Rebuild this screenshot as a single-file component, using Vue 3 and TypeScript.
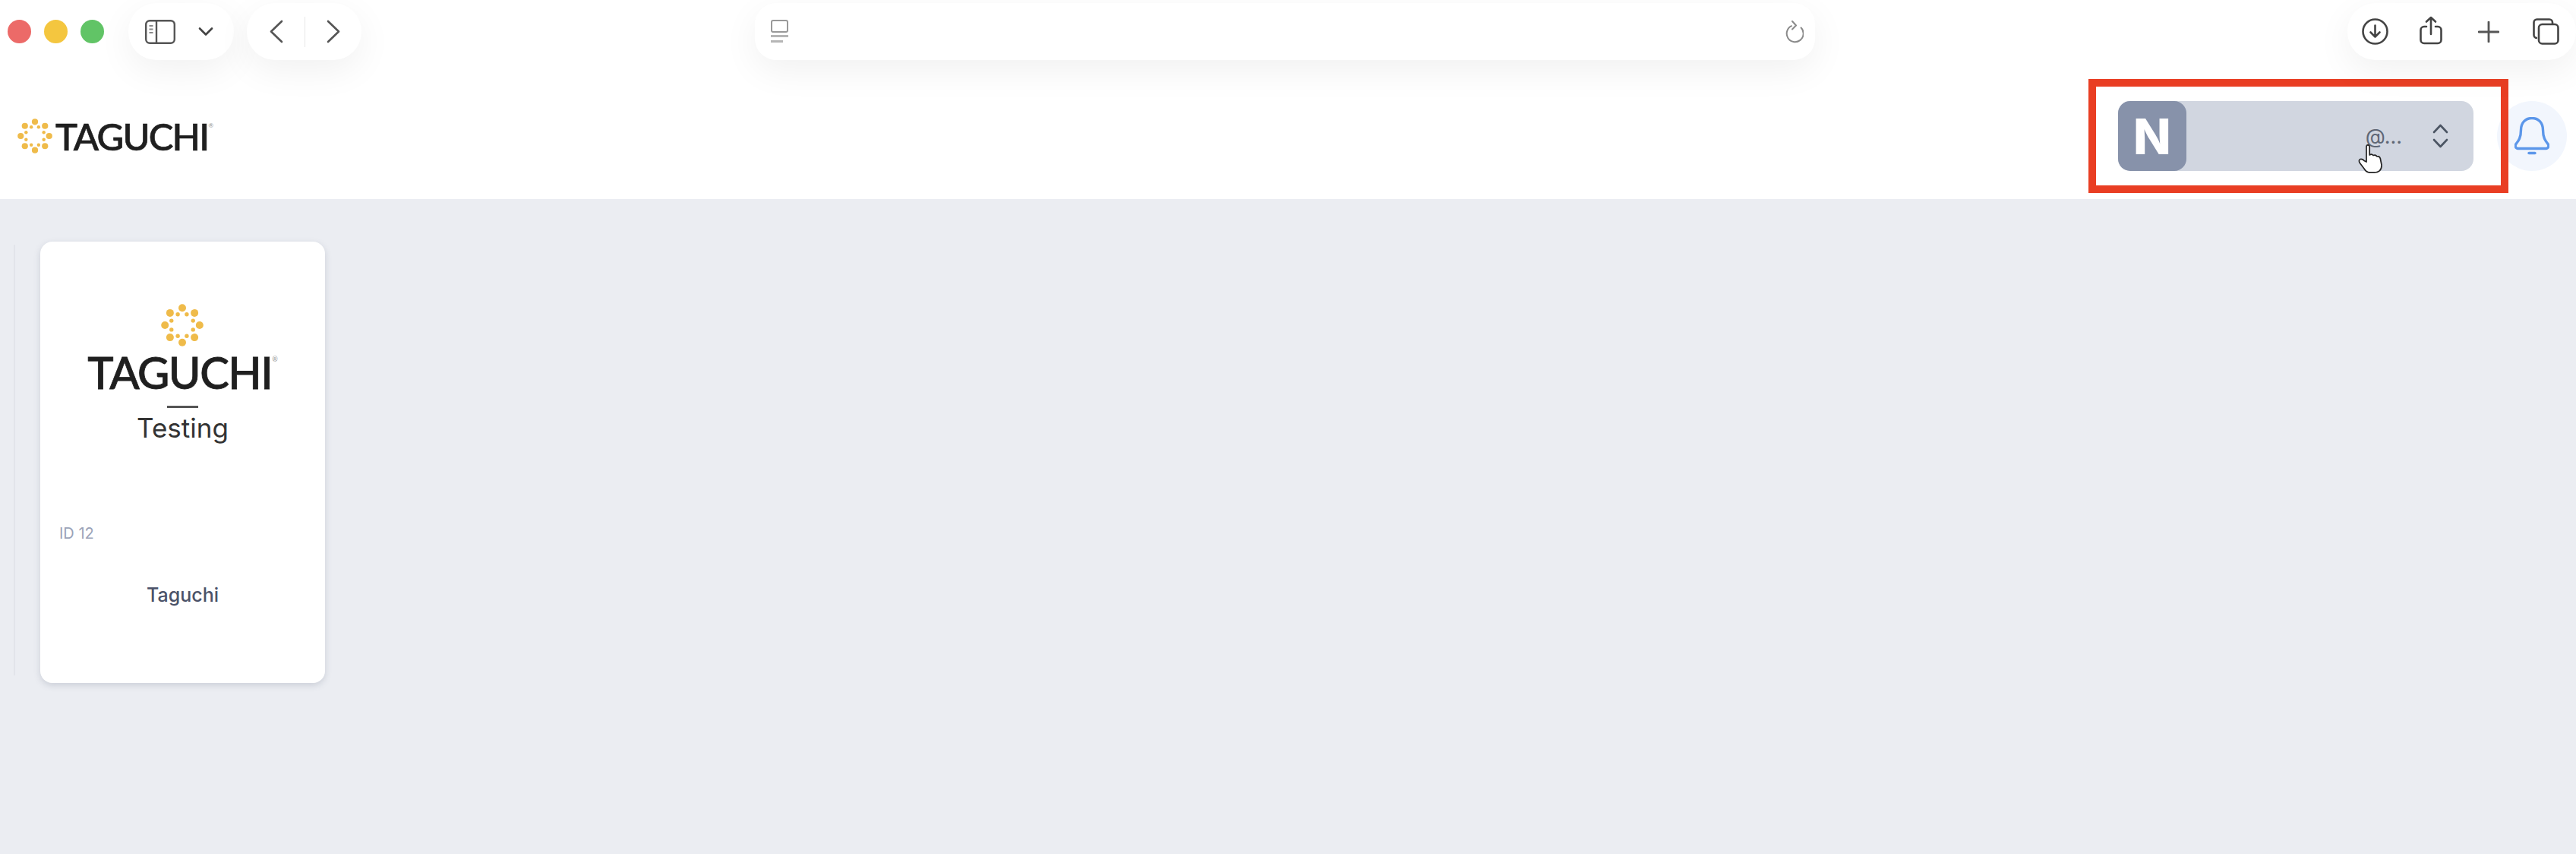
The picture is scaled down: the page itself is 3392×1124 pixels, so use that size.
<script setup lang="ts">
interface Dot {
  x: number
  y: number
  r: number
  key: string
}

// sunburst mark: 8 big dots on the outside, 8 small ones between them
const dots: Dot[] = []
for (let i = 0; i < 8; i++) {
  const a = (i * Math.PI) / 4
  dots.push({ x: 28 + 22.8 * Math.sin(a), y: 28 - 22.8 * Math.cos(a), r: 5, key: `o${i}` })
  const b = a + Math.PI / 8
  dots.push({ x: 28 + 15.4 * Math.sin(b), y: 28 - 15.4 * Math.cos(b), r: 2.7, key: `i${i}` })
}
</script>

<template>
  <div class="page">
    <div class="chrome">
      <div class="lights">
        <span class="light light-red"></span>
        <span class="light light-yellow"></span>
        <span class="light light-green"></span>
      </div>
      <div class="pill pill-sidebar">
        <svg class="ico-sidebar" viewBox="0 0 40 32" fill="none" stroke="#555" stroke-width="2.4">
          <rect x="1.2" y="1.2" width="37.6" height="29.6" rx="5" />
          <path d="M15 1.2v29.6" />
          <path d="M5.5 8h5M5.5 12.5h5M5.5 17h5" stroke-width="2" stroke="#888" />
        </svg>
        <svg class="ico-down" viewBox="0 0 20 13" fill="none" stroke="#444" stroke-width="2.6" stroke-linecap="round" stroke-linejoin="round">
          <path d="M2 2.500l8 8 8-8" />
        </svg>
      </div>
      <div class="pill pill-nav">
        <svg class="ico-nav" viewBox="0 0 18 31" fill="none" stroke="#555" stroke-width="2.6" stroke-linecap="round" stroke-linejoin="round">
          <path d="M16 2L2 15.500 16 29" />
        </svg>
        <span class="nav-sep"></span>
        <svg class="ico-nav" viewBox="0 0 18 31" fill="none" stroke="#555" stroke-width="2.6" stroke-linecap="round" stroke-linejoin="round">
          <path d="M2 2l14 13.500L2 29" />
        </svg>
      </div>
      <div class="address">
        <svg class="ico-page" viewBox="0 0 23 31" fill="none">
          <rect x="1" y="1" width="21" height="15" rx="2" stroke="#999" stroke-width="2" />
          <path d="M0 21.500h23" stroke="#b5b5b5" stroke-width="3" />
          <path d="M0 28.500h16" stroke="#b5b5b5" stroke-width="3" />
        </svg>
        <svg class="ico-reload" viewBox="0 0 25 30" fill="none" stroke="#8a8a8a" stroke-width="2" stroke-linecap="round" stroke-linejoin="round">
          <path d="M9 7.200A11 11 0 1 0 21.600 9.500" />
          <path d="M10 1l5 5.500-5 5" />
        </svg>
      </div>
      <div class="pill pill-actions">
        <svg class="ico-action" viewBox="0 0 35 35" fill="none" stroke="#444" stroke-width="2.6" stroke-linecap="round" stroke-linejoin="round">
          <circle cx="17.500" cy="17.500" r="16" />
          <path d="M17.500 9.500v15M11.500 18.500l6 6 6-6" />
        </svg>
        <svg class="ico-share" viewBox="0 0 30 38" fill="none" stroke="#444" stroke-width="2.6" stroke-linecap="round" stroke-linejoin="round">
          <path d="M9 14H6a4.500 4.500 0 0 0-4.500 4.500v13A4.500 4.500 0 0 0 6 36h18a4.500 4.500 0 0 0 4.500-4.500v-13A4.500 4.500 0 0 0 24 14h-3" />
          <path d="M15 24V2M9 7.500L15 2l6 5.500" />
        </svg>
        <svg class="ico-plus" viewBox="0 0 28 28" fill="none" stroke="#555" stroke-width="2.8" stroke-linecap="round">
          <path d="M14 1v26M1 14h26" />
        </svg>
        <svg class="ico-action" viewBox="0 0 35 35" fill="none" stroke="#444" stroke-width="2.6" stroke-linejoin="round">
          <path d="M6 26H5.500A4 4 0 0 1 1.500 22V5.500a4 4 0 0 1 4-4H22a4 4 0 0 1 4 4V7" />
          <rect x="8" y="8" width="25.500" height="25.500" rx="4.500" />
        </svg>
      </div>
    </div>

    <header class="app-header">
      <div class="brand">
        <svg class="mark-small" viewBox="0 0 56 56">
          <circle v-for="d in dots" :key="d.key" :cx="d.x" :cy="d.y" :r="d.r" fill="#efbb4a" />
        </svg>
        <span class="brand-name">TAGUCHI<sup class="brand-reg">®</sup></span>
      </div>
      <div class="account-wrap">
        <div class="account">
          <span class="account-avatar">N</span>
          <span class="account-email">@...</span>
          <svg class="account-arrows" viewBox="0 0 21 32" fill="none" stroke="#4b5563" stroke-width="2.6" stroke-linecap="round" stroke-linejoin="round">
            <path d="M2 11l8.500-9L19 11M2 21l8.500 9 8.500-9" />
          </svg>
          <svg class="cursor" viewBox="0 0 33 38">
            <path
              d="M11 23V3.500Q11 .8 13 .8T15.200 3.500V14Q18 12 20 14.600 23 13 25 16 28 15 29.300 18.500L31 27Q31.500 37.200 20 37.200H16Q11 37 8 32L2 24Q.5 20.500 3 19.500 6 19 8 21.500Z"
              fill="#fff"
              stroke="#222"
              stroke-width="1.7"
              stroke-linejoin="round"
            />
          </svg>
        </div>
        <span class="annotation"></span>
        <button class="bell" type="button" aria-label="Notifications">
          <svg viewBox="0 0 46 50" fill="none" stroke="#5c97ea" stroke-width="3.4" stroke-linecap="round" stroke-linejoin="round">
            <path d="M23 1.500C14 1.500 8.500 8 8.500 17c0 10-3 14-6.500 18.500-1.800 2.500-.5 6 2.500 6h37c3 0 4.300-3.500 2.500-6C40.500 31 37.500 27 37.500 17 37.500 8 32 1.500 23 1.500Z" />
            <path d="M19 47.500h8" />
          </svg>
        </button>
      </div>
    </header>

    <main class="content">
      <div class="rail"></div>
      <article class="card">
        <div class="card-logo">
          <svg class="mark-large" viewBox="0 0 56 56">
            <circle v-for="d in dots" :key="d.key" :cx="d.x" :cy="d.y" :r="d.r" fill="#efbb4a" />
          </svg>
          <div class="card-logo-name">TAGUCHI<sup class="card-logo-reg">®</sup></div>
          <div class="card-logo-rule"></div>
          <div class="card-logo-sub">Testing</div>
        </div>
        <div class="card-id">ID 12</div>
        <div class="card-name">Taguchi</div>
      </article>
    </main>
  </div>
</template>

<style>
html,
body {
  margin: 0;
  background: #ebedf2;
}
</style>

<style scoped>
.page {
  display: flex;
  flex-direction: column;
  width: 3392px;
  height: 1124px;
  overflow: hidden;
  font-family: Inter, "Liberation Sans", sans-serif;
  background: #ebedf2;
}

.chrome {
  position: relative;
  z-index: 1;
  display: flex;
  align-items: flex-start;
  box-sizing: border-box;
  height: 84px;
  padding: 4px 0 0 10px;
  background: #fff;
}

.lights {
  display: flex;
  gap: 17px;
  align-items: center;
  height: 75px;
  margin-right: 32px;
}

.light {
  width: 31px;
  height: 31px;
  border-radius: 50%;
}

.light-red {
  background: #ec6a68;
}

.light-yellow {
  background: #f4c63f;
}

.light-green {
  background: #61c466;
}

.pill,
.address {
  display: flex;
  align-items: center;
  box-sizing: border-box;
  height: 75px;
  background: #fff;
  border-radius: 37px;
  box-shadow: 0 14px 48px rgba(0, 0, 0, 0.06);
}

.pill-sidebar {
  width: 139px;
  padding-left: 22px;
  margin-right: 17px;
}

.ico-sidebar {
  width: 40px;
  height: 32px;
  margin-right: 30px;
}

.ico-down {
  width: 20px;
  height: 13px;
}

.pill-nav {
  width: 151px;
  padding-left: 30px;
}

.ico-nav {
  width: 18px;
  height: 31px;
}

.nav-sep {
  width: 1px;
  height: 40px;
  margin: 0 28px;
  background: #e8e8e8;
}

.address {
  justify-content: space-between;
  width: 1396px;
  padding: 0 15px 0 21px;
  margin-left: 518px;
  border-radius: 28px;
}

.ico-page {
  width: 23px;
  height: 31px;
}

.ico-reload {
  width: 25px;
  height: 30px;
}

.pill-actions {
  width: 301px;
  padding-left: 19px;
  margin-left: auto;
}

.ico-action {
  flex: none;
  width: 35px;
  height: 35px;
}

.ico-share {
  width: 30px;
  height: 38px;
  margin: -3px 47px 0 41px;
}

.ico-plus {
  width: 28px;
  height: 28px;
  margin-right: 44px;
}

.app-header {
  display: flex;
  align-items: center;
  justify-content: space-between;
  box-sizing: border-box;
  height: 178px;
  padding: 0 12px 0 23px;
  background: #fff;
}

.brand {
  display: flex;
  align-items: center;
  gap: 4px;
  margin-top: 12px;
}

.mark-small {
  width: 46px;
  height: 46px;
}

.brand-name {
  font-family: Lato, Inter, sans-serif;
  font-size: 49px;
  font-weight: 500;
  line-height: 1;
  letter-spacing: -1.8px;
  color: #1f1f1f;
  -webkit-text-stroke: 0.7px #1f1f1f;
}

.brand-reg {
  font-size: 8px;
  color: #999;
  vertical-align: 30px;
  line-height: 0;
  letter-spacing: 0;
  -webkit-text-stroke: 0;
}

.account-wrap {
  position: relative;
  display: flex;
  align-items: center;
  margin-top: 12px;
}

.account {
  position: relative;
  display: flex;
  align-items: center;
  box-sizing: border-box;
  width: 468px;
  height: 92px;
  background: #d1d6e0;
  border-radius: 16px;
}

.account-avatar {
  display: flex;
  align-items: center;
  justify-content: center;
  width: 90px;
  height: 92px;
  font-size: 65px;
  font-weight: 800;
  color: #fff;
  background: #8792aa;
  border-radius: 16px;
}

.account-email {
  margin-left: auto;
  font-size: 27px;
  color: #5f6775;
}

.account-arrows {
  width: 21px;
  height: 32px;
  margin: 0 33px 0 40px;
}

.cursor {
  position: absolute;
  top: 57px;
  left: 316px;
  width: 33px;
  height: 38px;
}

.annotation {
  position: absolute;
  top: -29px;
  left: -39px;
  box-sizing: border-box;
  width: 553px;
  height: 150px;
  pointer-events: none;
  border: 10px solid #e93e23;
}

.bell {
  display: flex;
  align-items: center;
  justify-content: center;
  width: 92px;
  height: 92px;
  padding: 0;
  margin-left: 31px;
  background: #f2f6fd;
  border: 0;
  border-radius: 50%;
}

.bell svg {
  width: 46px;
  height: 50px;
}

.content {
  display: flex;
  flex: 1;
  align-items: flex-start;
  padding: 56px 0 0 18px;
}

.rail {
  width: 2px;
  height: 567px;
  margin: 4px 33px 0 0;
  background: #e2e4ea;
}

.card {
  display: flex;
  flex-direction: column;
  box-sizing: border-box;
  width: 375px;
  height: 581px;
  padding-top: 82px;
  background: #fff;
  border-radius: 16px;
  box-shadow: 0 3px 8px rgba(90, 100, 125, 0.22);
}

.card-logo {
  display: flex;
  flex-direction: column;
  align-items: center;
  box-sizing: border-box;
  height: 289px;
}

.mark-large {
  flex: none;
  width: 56px;
  height: 56px;
  margin-left: -1px;
}

.card-logo-name {
  margin-top: 2px;
  font-family: Lato, Inter, sans-serif;
  font-size: 58px;
  font-weight: 500;
  line-height: 64px;
  letter-spacing: -1.5px;
  color: #1f1f1f;
  -webkit-text-stroke: 0.8px #1f1f1f;
}

.card-logo-reg {
  font-size: 9px;
  color: #999;
  line-height: 0;
  vertical-align: 36px;
  letter-spacing: 0;
  -webkit-text-stroke: 0;
}

.card-logo-rule {
  width: 41px;
  height: 3px;
  margin-top: 12px;
  background: #555;
}

.card-logo-sub {
  margin-top: 4px;
  font-size: 35px;
  line-height: 44px;
  color: #333;
}

.card-id {
  padding-left: 25px;
  font-size: 20px;
  line-height: 26px;
  color: #9aa3b8;
}

.card-name {
  margin-top: 52px;
  font-size: 25px;
  font-weight: 500;
  line-height: 32px;
  color: #4b5268;
  text-align: center;
}
</style>
